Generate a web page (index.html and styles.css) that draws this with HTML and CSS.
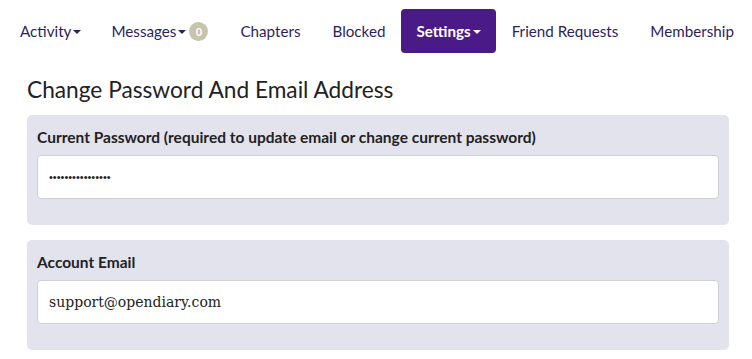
FILE: index.html
```html
<!DOCTYPE html>
<html>
<head>
    <title>Settings</title>
    <link rel="stylesheet" href="styles.css">
</head>
<body>
    <nav class="tabs">
        <a class="tab" href="#">Activity<span class="caret"></span></a>
        <a class="tab" href="#">Messages<span class="caret"></span><span class="badge">0</span></a>
        <a class="tab" href="#">Chapters</a>
        <a class="tab" href="#">Blocked</a>
        <a class="tab active" href="#">Settings<span class="caret"></span></a>
        <a class="tab" href="#">Friend Requests</a>
        <a class="tab" href="#">Membership</a>
    </nav>

    <div class="content">
        <h2>Change Password And Email Address</h2>

        <div class="panel">
            <label for="current-password">Current Password (required to update email or change current password)</label>
            <input id="current-password" class="password" type="password" value="superdupersecret">
        </div>

        <div class="panel">
            <label for="account-email">Account Email</label>
            <input id="account-email" type="text" value="support@opendiary.com">
        </div>
    </div>
</body>
</html>
```

FILE: styles.css
```css
body {
    font-family: "Lato", "Noto Sans", sans-serif;
    margin: 0;
    background: white;
    color: #222;
}

.tabs {
    display: flex;
    padding: 9px 4px 0;
    white-space: nowrap;
}

.tab {
    display: flex;
    align-items: center;
    height: 44px;
    padding: 0 16px;
    font-size: 15.2px;
    color: #2d1f5c;
    text-decoration: none;
    border-radius: 4px;
}

.tab:first-child {
    padding-right: 14px;
}

.tab.active {
    background: #4a1a87;
    color: white;
    font-weight: bold;
    padding: 0 15px;
}

.caret {
    display: inline-block;
    width: 0;
    height: 0;
    margin-left: 2px;
    margin-top: 2px;
    border-top: 4px solid currentColor;
    border-left: 4px solid transparent;
    border-right: 4px solid transparent;
}

.badge {
    display: inline-flex;
    align-items: center;
    justify-content: center;
    width: 19px;
    height: 19px;
    margin-left: 3px;
    border-radius: 50%;
    background: #c8c3ac;
    color: white;
    font-size: 11px;
    font-weight: bold;
}

.content {
    padding: 0 23px 0 27px;
}

h2 {
    font-size: 22.7px;
    font-weight: normal;
    margin: 22px 0 11px;
    line-height: 29px;
    color: #222;
}

.panel {
    background: #e3e3ee;
    border-radius: 5px;
    padding: 12px 10px 26px;
    margin-bottom: 15px;
}

.panel label {
    display: block;
    font-size: 15.5px;
    font-weight: bold;
    color: #222;
    line-height: 20px;
    margin-bottom: 8px;
}

.panel input {
    display: block;
    box-sizing: border-box;
    width: 100%;
    height: 44px;
    padding: 0 11px;
    border: 1px solid #cfcfd6;
    border-radius: 4px;
    background: white;
    font-family: "DejaVu Serif", "Liberation Serif", serif;
    font-size: 14px;
    color: #222;
    outline: none;
}

.panel input.password {
    font-family: "Liberation Sans", sans-serif;
    font-size: 11px;
}
```
